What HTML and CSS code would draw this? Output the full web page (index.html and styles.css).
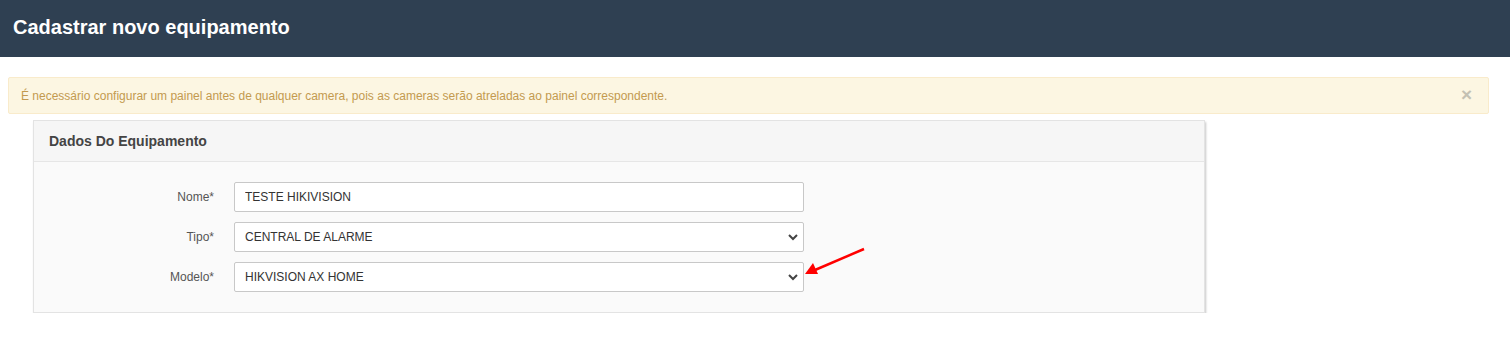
FILE: index.html
```html
<!DOCTYPE html>
<html lang="pt-BR">
<head>
    <meta charset="UTF-8">
    <title>Cadastrar novo equipamento</title>
    <link rel="stylesheet" href="styles.css">
</head>
<body>
    <div class="page-header">
        <h1>Cadastrar novo equipamento</h1>
    </div>

    <div class="content">
        <div class="alert">
            <span>É necessário configurar um painel antes de qualquer camera, pois as cameras serão atreladas ao painel correspondente.</span>
            <span class="close">&times;</span>
        </div>

        <div class="panel">
            <div class="panel-heading">Dados Do Equipamento</div>
            <div class="panel-body">
                <div class="form-row">
                    <label>Nome*</label>
                    <input class="field" type="text" value="TESTE HIKIVISION">
                </div>
                <div class="form-row">
                    <label>Tipo*</label>
                    <div class="field select">
                        <span>CENTRAL DE ALARME</span>
                        <svg class="chevron" width="10" height="8" viewBox="0 0 10 8"><path d="M1 2 L5 6 L9 2" fill="none" stroke="#444" stroke-width="2"/></svg>
                    </div>
                </div>
                <div class="form-row">
                    <label>Modelo*</label>
                    <div class="field select">
                        <span>HIKVISION AX HOME</span>
                        <svg class="chevron" width="10" height="8" viewBox="0 0 10 8"><path d="M1 2 L5 6 L9 2" fill="none" stroke="#444" stroke-width="2"/></svg>
                    </div>
                    <svg class="arrow" width="64" height="32" viewBox="0 0 64 32">
                        <line x1="61" y1="3" x2="12" y2="24" stroke="#f00" stroke-width="2.5"/>
                        <path d="M2 28 L10 17 L15 28 Z" fill="#f00"/>
                    </svg>
                </div>
            </div>
        </div>
    </div>
</body>
</html>
```

FILE: styles.css
```css
* {
    box-sizing: border-box;
}

body {
    margin: 0;
    background: #ffffff;
    font-family: "Liberation Sans", Arial, sans-serif;
    color: #333;
}

.page-header {
    background: #2f4052;
    height: 57px;
    padding: 0 13px;
    display: flex;
    align-items: center;
}

.page-header h1 {
    margin: 0;
    color: #ffffff;
    font-size: 20px;
    font-weight: bold;
    padding-bottom: 2px;
}

.content {
    padding: 20px 21px 0 8px;
}

.alert {
    background: #fcf6e2;
    border: 1px solid #f9ebcb;
    border-radius: 2px;
    color: #c39a4f;
    font-size: 12px;
    height: 37px;
    padding: 0 16px 0 12px;
    display: flex;
    align-items: center;
    justify-content: space-between;
}

.alert .close {
    color: #c4c1b3;
    font-size: 19px;
    font-weight: bold;
    line-height: 1;
    margin-top: -3px;
}

.panel {
    margin: 6px 0 0 25px;
    width: 1172px;
    border: 1px solid #e3e3e3;
    background: #fafafa;
    box-shadow: 1px 2px 2px rgba(0, 0, 0, 0.22);
}

.panel-heading {
    background: #f6f6f6;
    border-bottom: 1px solid #e6e6e6;
    height: 41px;
    padding: 0 15px;
    display: flex;
    align-items: center;
    font-size: 14px;
    font-weight: bold;
    color: #444;
}

.panel-body {
    padding: 20px 0 20px 0;
    display: flex;
    flex-direction: column;
    gap: 10px;
}

.form-row {
    display: flex;
    align-items: center;
    position: relative;
}

.form-row label {
    width: 180px;
    text-align: right;
    font-size: 12px;
    color: #555;
    margin-right: 20px;
}

.field {
    width: 570px;
    height: 30px;
    border: 1px solid #c8c8c8;
    border-radius: 2px;
    background: #ffffff;
    font-family: "Liberation Sans", Arial, sans-serif;
    font-size: 12px;
    color: #333;
    padding: 0 10px;
}

.select {
    display: flex;
    align-items: center;
    justify-content: space-between;
    padding-right: 5px;
}

.arrow {
    position: absolute;
    left: 769px;
    top: -16px;
}
```
